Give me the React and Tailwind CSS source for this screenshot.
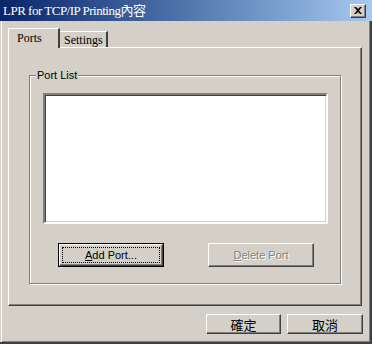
import React from "react";

const raised =
  "border border-t-white border-l-white border-r-[#404040] border-b-[#404040] shadow-[inset_-1px_-1px_0_#808080]";

const Button = ({ children, width, height, isDefault, disabled, cjk }) => {
  return (
    <div
      className={`flex items-center justify-center bg-[#d4d0c8] ${
        isDefault ? "border border-black" : ""
      }`}
      style={{ width, height }}
    >
      <div className={`flex h-full w-full items-center justify-center p-[3px] ${raised}`}>
        <div
          className={`flex h-full w-full items-center justify-center ${
            isDefault ? "outline outline-1 outline-dotted outline-black" : ""
          }`}
        >
          <span
            className={`leading-none ${
              cjk ? "font-['Noto_Sans_CJK_TC',sans-serif] text-[13px]" : "font-['Liberation_Sans',sans-serif] text-[11px]"
            } ${disabled ? "text-[#808080] [text-shadow:1px_1px_0_#fff]" : "text-black"}`}
          >
            {children}
          </span>
        </div>
      </div>
    </div>
  );
};

const App = () => {
  return (
    <div className="flex h-[344px] w-[372px] flex-col overflow-hidden bg-[#d4d0c8] font-['Liberation_Sans',sans-serif]">
      {/* title bar */}
      <div className="flex h-[21px] shrink-0 items-center justify-between bg-linear-to-r from-[#0a246a] to-[#a6caf0] pl-[3px] pr-[6px]">
        <span className="font-['Liberation_Serif','Noto_Sans_CJK_TC',serif] text-[13px] tracking-[-0.5px] text-white">
          LPR for TCP/IP Printing內容
        </span>
        <div className={`flex h-[14px] w-[16px] items-center justify-center bg-[#d4d0c8] ${raised}`}>
          <svg width="8" height="7" viewBox="0 0 8 7">
            <path d="M0 0h2l2 2 2-2h2L5 3.5 8 7H6L4 5 2 7H0l3-3.5z" fill="#000" />
          </svg>
        </div>
      </div>

      {/* dialog body */}
      <div className="flex flex-1 flex-col border-r-2 border-b-2 border-r-[#404040] border-b-[#404040] pl-[8px] shadow-[inset_1px_0_0_#d4d0c8,inset_2px_0_0_#fff,inset_-1px_-1px_0_#808080]">
        {/* tabs */}
        <div className="mt-[7px] flex h-[19px]">
          <div className="relative z-10 flex h-[20px] w-[52px] items-start border-t border-l border-r-2 border-t-white border-l-white border-r-[#404040] bg-[#d4d0c8] pl-[8px] pt-[2px]">
            <span className="font-['Liberation_Serif',serif] text-[12px] leading-[14px] text-black">Ports</span>
          </div>
          <div className="mt-[3px] flex h-[16px] w-[48px] items-start border-t border-r-2 border-t-white border-r-[#404040] pl-[4px] pt-[1px]">
            <span className="font-['Liberation_Serif',serif] text-[12px] leading-[14px] text-black">Settings</span>
          </div>
        </div>

        {/* tab panel */}
        <div className={`h-[259px] w-[354px] pl-[20px] pt-[27px] ${raised}`}>
          <div className="relative h-[209px] w-[312px] border border-[#808080] pl-[13px] pt-[17px] shadow-[1px_1px_0_#fff,inset_1px_1px_0_#fff]">
            <span className="absolute -top-[7px] left-[6px] bg-[#d4d0c8] px-[1px] text-[11px] leading-[13px] text-black">
              Port List
            </span>
            <div className="h-[131px] w-[285px] border-2 border-t-[#808080] border-l-[#808080] border-r-white border-b-white bg-white shadow-[inset_1px_1px_0_#404040,inset_-1px_-1px_0_#d4d0c8]" />
            <div className="mt-[19px] flex gap-[44px] pl-[15px]">
              <Button width={106} height={24} isDefault>
                <span className="underline">A</span>dd Port...
              </Button>
              <Button width={106} height={24} disabled>
                <span className="underline">D</span>elete Port
              </Button>
            </div>
          </div>
        </div>

        {/* bottom buttons */}
        <div className="mt-[8px] flex gap-[6px] pl-[198px]">
          <Button width={75} height={20} cjk>
            確定
          </Button>
          <Button width={76} height={20} cjk>
            取消
          </Button>
        </div>
      </div>
    </div>
  );
};

export default App;
